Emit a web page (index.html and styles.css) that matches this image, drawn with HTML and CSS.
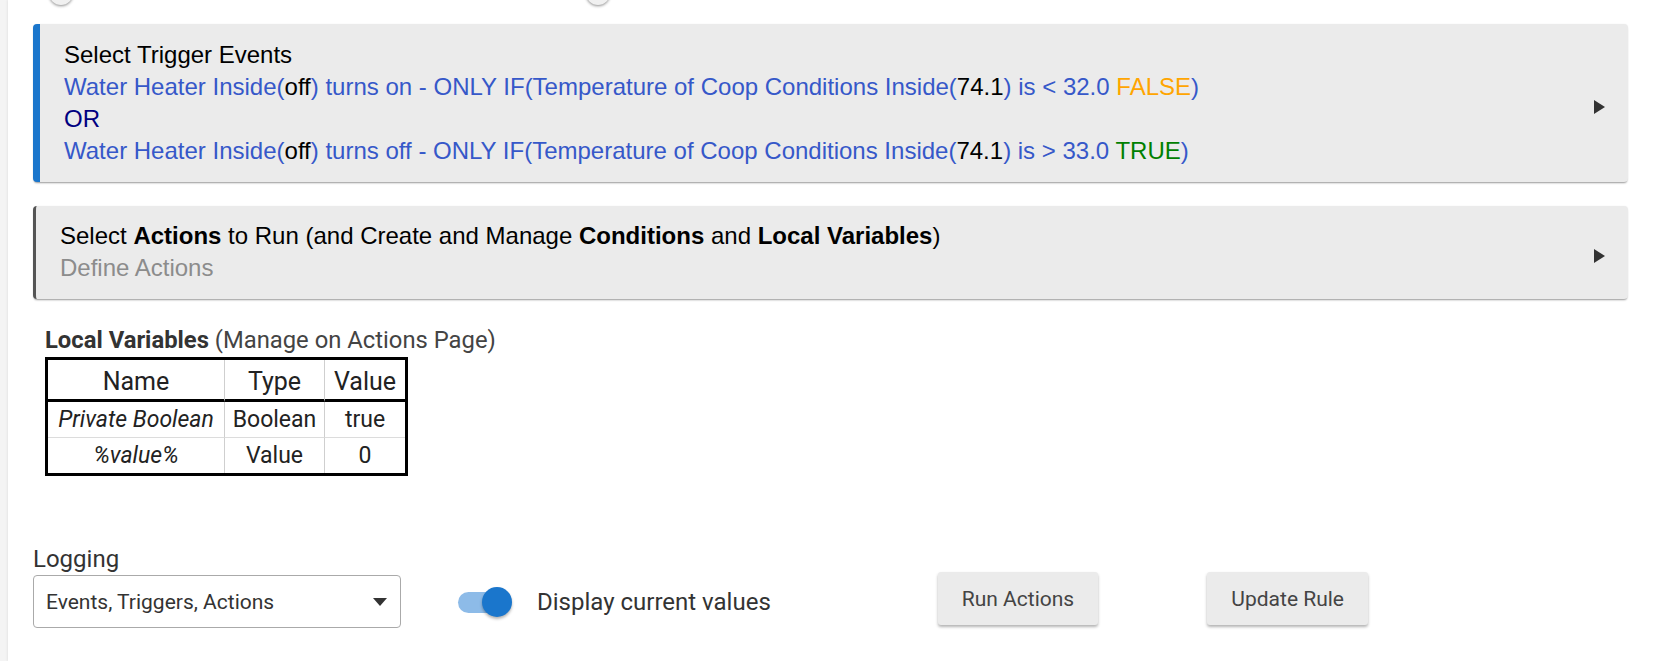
FILE: index.html
```html
<!DOCTYPE html>
<html>
<head>
<meta charset="utf-8">
<title>Rule</title>
<link rel="stylesheet" href="styles.css">
</head>
<body>
<div class="page">
  <span class="top-dot top-dot-a"></span>
  <span class="top-dot top-dot-b"></span>

  <div class="card card-trigger">
    <div class="card-body">
      <div class="line">Select Trigger Events</div>
      <div class="line"><span class="blue">Water Heater Inside(</span>off<span class="blue">) turns on - ONLY IF(Temperature of Coop Conditions Inside(</span>74.1<span class="blue">) is &lt; 32.0 </span><span class="orange">FALSE</span><span class="blue">)</span></div>
      <div class="line navy">OR</div>
      <div class="line"><span class="blue">Water Heater Inside(</span>off<span class="blue">) turns off - ONLY IF(Temperature of Coop Conditions Inside(</span>74.1<span class="blue">) is &gt; 33.0 </span><span class="green">TRUE</span><span class="blue">)</span></div>
    </div>
    <span class="arrow"></span>
  </div>

  <div class="card card-actions">
    <div class="card-body">
      <div class="line">Select <b>Actions</b> to Run (and Create and Manage <b>Conditions</b> and <b>Local Variables</b>)</div>
      <div class="line muted">Define Actions</div>
    </div>
    <span class="arrow"></span>
  </div>

  <div class="locals">
    <div class="locals-title"><b>Local Variables</b> (Manage on Actions Page)</div>
    <table class="vars">
      <thead>
        <tr><th class="c1">Name</th><th class="c2">Type</th><th class="c3">Value</th></tr>
      </thead>
      <tbody>
        <tr><td class="name">Private Boolean</td><td>Boolean</td><td>true</td></tr>
        <tr class="row2"><td class="name">%value%</td><td>Value</td><td>0</td></tr>
      </tbody>
    </table>
  </div>

  <div class="log-row">
    <div class="log-field">
      <div class="log-label">Logging</div>
      <div class="select">
        <span class="select-text">Events, Triggers, Actions</span>
        <span class="caret"></span>
      </div>
    </div>
    <div class="toggle-group">
      <span class="switch"><span class="track"></span><span class="knob"></span></span>
      <span class="toggle-label">Display current values</span>
    </div>
    <button class="btn btn-run">Run Actions</button>
    <button class="btn btn-update">Update Rule</button>
  </div>
</div>
</body>
</html>
```

FILE: styles.css
```css
html, body {
  margin: 0;
  padding: 0;
}

body {
  background: #f4f4f4;
  font-family: Roboto, "Liberation Sans", sans-serif;
  color: #333;
}

.page {
  position: relative;
  margin-left: 8px;
  min-height: 661px;
  box-sizing: border-box;
  background: #fff;
  padding: 24px 47px 0 25px;
  box-shadow: -1px 0 2px rgba(0, 0, 0, 0.06);
  overflow: hidden;
}

.top-dot {
  position: absolute;
  top: -19px;
  width: 24px;
  height: 24px;
  border-radius: 50%;
  background: #f0f0f0;
  box-shadow: 0 1px 3px rgba(0, 0, 0, 0.45);
}

.top-dot-a { left: 41px; }
.top-dot-b { left: 578px; }

/* Cards */
.card {
  display: flex;
  align-items: center;
  background: #ebebeb;
  border-radius: 4px;
  box-shadow: 0 2px 2px -1px rgba(0, 0, 0, 0.4), 0 0 2px rgba(0, 0, 0, 0.06);
  font-family: "Liberation Sans", Arial, sans-serif;
  font-size: 24px;
  line-height: 32px;
  color: #000;
}

.card-trigger {
  border-left: 7px solid #1a76cc;
  padding: 15px 23px 15px 24px;
}

.card-actions {
  border-left: 3px solid #555;
  padding: 14px 23px 15px 24px;
  margin-top: 24px;
}

.card-body {
  flex: 1;
  white-space: nowrap;
}

.blue { color: #3658c9; }
.navy { color: #000080; }
.orange { color: #ffa500; }
.green { color: #008000; }
.muted { color: #8c8c8c; }

.arrow {
  width: 0;
  height: 0;
  margin-top: 8px;
  border-left: 11px solid #333;
  border-top: 7px solid transparent;
  border-bottom: 7px solid transparent;
}

/* Local variables */
.locals {
  margin-top: 28px;
  padding-left: 12px;
}

.locals-title {
  font-size: 23.8px;
  line-height: 26px;
  color: #444;
}

.locals-title b {
  color: #333;
}

.vars {
  margin-top: 4px;
  border-collapse: separate;
  border-spacing: 0;
  border: 3px solid #000;
  table-layout: fixed;
  width: 363px;
  color: #222;
}

.vars th,
.vars td {
  padding: 0;
  text-align: center;
  vertical-align: middle;
  box-sizing: border-box;
  white-space: nowrap;
}

.vars th {
  height: 42px;
  padding-top: 3px;
  font-size: 25px;
  font-weight: normal;
  border-bottom: 3px solid #000;
}

.vars td {
  height: 35px;
  font-size: 23px;
}

.vars th + th,
.vars td + td {
  border-left: 1px solid #cfcfcf;
}

.vars .c1 { width: 176px; }
.vars .c2 { width: 100px; }
.vars .c3 { width: 81px; }

.vars .row2 td {
  border-top: 1px solid #dcdcdc;
  height: 36px;
}

.vars .name {
  font-style: italic;
}

/* Logging row */
.log-row {
  display: flex;
  align-items: flex-end;
  margin-top: 69px;
}

.log-label {
  font-size: 24px;
  line-height: 28px;
  color: #333;
}

.select {
  display: flex;
  align-items: center;
  justify-content: space-between;
  box-sizing: border-box;
  width: 368px;
  height: 53px;
  margin-top: 2px;
  padding: 0 13px 0 12px;
  border: 1px solid #aaa;
  border-radius: 4px;
  font-size: 21px;
  color: #333;
}

.caret {
  width: 0;
  height: 0;
  border-top: 8px solid #333;
  border-left: 7px solid transparent;
  border-right: 7px solid transparent;
}

.toggle-group {
  display: flex;
  align-items: center;
  height: 53px;
  margin-left: 57px;
}

.switch {
  position: relative;
  display: inline-block;
  width: 54px;
  height: 30px;
}

.track {
  position: absolute;
  left: 0;
  top: 5px;
  width: 48px;
  height: 21px;
  border-radius: 11px;
  background: #8dbbe8;
}

.knob {
  position: absolute;
  left: 24px;
  top: 0;
  width: 30px;
  height: 30px;
  border-radius: 50%;
  background: #1a76cc;
  box-shadow: 0 2px 3px rgba(0, 0, 0, 0.3);
}

.toggle-label {
  margin-left: 25px;
  font-size: 24px;
  color: #333;
}

.btn {
  height: 53px;
  margin-bottom: 3px;
  padding: 0 24px;
  min-width: 160px;
  border: none;
  border-radius: 3px;
  background: #ebebeb;
  box-shadow: 0 2px 3px rgba(0, 0, 0, 0.3);
  font-family: Roboto, "Liberation Sans", sans-serif;
  font-size: 21px;
  color: #444;
}

.btn-run { margin-left: 167px; }
.btn-update { margin-left: 109px; min-width: 161px; }
```
